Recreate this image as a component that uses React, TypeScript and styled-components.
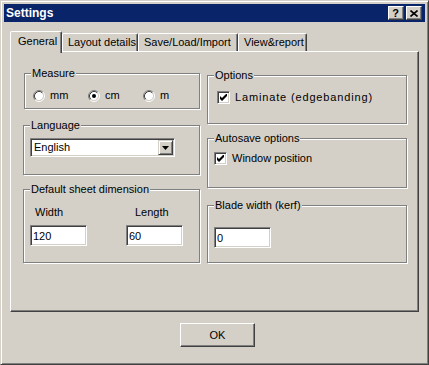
import React from "react";
import styled, { createGlobalStyle } from "styled-components";

const Global = createGlobalStyle`
  html, body { margin: 0; padding: 0; background: #D4D0C8; }
  body {
    font-family: "Liberation Sans", Arial, sans-serif;
    font-size: 11px;
    color: #000;
  }
  * { box-sizing: border-box; }
`;

const Window = styled.div`
  width: 429px;
  height: 365px;
  background: #d4d0c8;
  border: 1px solid;
  border-color: #d4d0c8 #404040 #404040 #d4d0c8;
  box-shadow: inset 1px 1px 0 #fff, inset -1px -1px 0 #808080;
  padding: 3px;
  display: flex;
  flex-direction: column;
`;

const TitleBar = styled.div`
  height: 18px;
  background: #0a246a;
  display: flex;
  align-items: center;
  gap: 2px;
  padding: 0 3px 0 2px;
`;

const Title = styled.div`
  flex: 1;
  color: #fff;
  font-weight: bold;
  font-size: 12px;
  line-height: 18px;
`;

const CaptionButton = styled.div`
  width: 16px;
  height: 14px;
  background: #d4d0c8;
  border: 1px solid;
  border-color: #fff #404040 #404040 #fff;
  box-shadow: inset -1px -1px 0 #808080;
  display: flex;
  align-items: center;
  justify-content: center;
  font-weight: bold;
  font-size: 11px;
  line-height: 12px;
  padding-right: 1px;
`;

const Body = styled.div`
  padding: 9px 0 0 6px;
  display: flex;
  flex-direction: column;
`;

const TabRow = styled.div`
  display: flex;
  align-items: flex-end;
  height: 20px;
`;

const Tab = styled.div<{ $w: number; $active?: boolean }>`
  position: relative;
  z-index: ${(p) => (p.$active ? 1 : 0)};
  width: ${(p) => p.$w}px;
  height: ${(p) => (p.$active ? 22 : 18)}px;
  margin-bottom: ${(p) => (p.$active ? -2 : 0)}px;
  background: #d4d0c8;
  border: 1px solid;
  border-bottom: none;
  border-color: #fff #404040 transparent #fff;
  box-shadow: inset -1px 0 0 #808080;
  border-radius: 2px 2px 0 0;
  padding-left: ${(p) => (p.$active ? 7 : 5)}px;
  padding-top: ${(p) => (p.$active ? 1 : 0)}px;
  line-height: 16px;
  white-space: nowrap;
`;

const Panel = styled.div`
  width: 409px;
  height: 261px;
  border: 1px solid;
  border-color: #fff #404040 #404040 #fff;
  box-shadow: inset -1px -1px 0 #808080;
  padding-left: 12px;
  display: flex;
  gap: 7px;
`;

const Column = styled.div<{ $w: number }>`
  width: ${(p) => p.$w}px;
  display: flex;
  flex-direction: column;
`;

const Group = styled.div<{ $mt: number; $h: number; $ml?: number; $pad: string }>`
  position: relative;
  margin-top: ${(p) => p.$mt}px;
  margin-left: ${(p) => p.$ml ?? 0}px;
  height: ${(p) => p.$h}px;
  border: 1px solid #808080;
  box-shadow: inset 1px 1px 0 #fff, 1px 1px 0 #fff;
  padding: ${(p) => p.$pad};
`;

const Caption = styled.span`
  position: absolute;
  top: -7px;
  left: 6px;
  padding: 0 1px;
  background: #d4d0c8;
  line-height: 13px;
  white-space: nowrap;
`;

const RadioRow = styled.div`
  display: grid;
  grid-template-columns: repeat(3, 55px);
`;

const OptionLabel = styled.label<{ $spacing?: number }>`
  display: flex;
  align-items: center;
  gap: 5px;
  line-height: 13px;
  letter-spacing: ${(p) => p.$spacing ?? 0}px;
  white-space: nowrap;
`;

const CheckBox = styled.span`
  width: 13px;
  height: 13px;
  background: #fff;
  border: 1px solid;
  border-color: #808080 #fff #fff #808080;
  box-shadow: inset 1px 1px 0 #404040, inset -1px -1px 0 #d4d0c8;
  display: flex;
  align-items: center;
  justify-content: center;
  flex: none;
`;

const Select = styled.div`
  width: 145px;
  height: 19px;
  background: #fff;
  border: 1px solid;
  border-color: #808080 #fff #fff #808080;
  box-shadow: inset 1px 1px 0 #404040, inset -1px -1px 0 #d4d0c8;
  padding: 1px 1px 1px 2px;
  display: flex;
  align-items: center;
`;

const SelectText = styled.span`
  flex: 1;
  line-height: 15px;
  padding-left: 1px;
`;

const DropButton = styled.span`
  width: 15px;
  height: 15px;
  background: #d4d0c8;
  border: 1px solid;
  border-color: #d4d0c8 #404040 #404040 #d4d0c8;
  box-shadow: inset 1px 1px 0 #fff, inset -1px -1px 0 #808080;
  display: flex;
  align-items: center;
  justify-content: center;
`;

const DimGrid = styled.div`
  display: grid;
  grid-template-columns: 96px 60px;
  row-gap: 6px;
`;

const DimLabel = styled.span<{ $indent: number }>`
  padding-left: ${(p) => p.$indent}px;
  line-height: 13px;
`;

const TextField = styled.input`
  width: 57px;
  height: 21px;
  margin: 0;
  background: #fff;
  border: 1px solid;
  border-color: #808080 #fff #fff #808080;
  box-shadow: inset 1px 1px 0 #404040, inset -1px -1px 0 #d4d0c8;
  padding: 1px 2px 1px 2px;
  font-family: "Liberation Sans", Arial, sans-serif;
  font-size: 11px;
  line-height: 15px;
  color: #000;
  outline: none;
`;

const Footer = styled.div`
  display: flex;
  justify-content: center;
  padding-top: 11px;
`;

const PushButton = styled.div`
  width: 75px;
  height: 24px;
  background: #d4d0c8;
  border: 1px solid;
  border-color: #fff #404040 #404040 #fff;
  box-shadow: inset -1px -1px 0 #808080;
  display: flex;
  align-items: center;
  justify-content: center;
  line-height: 13px;
`;

function Radio({ checked }: { checked?: boolean }) {
  return (
    <svg width="12" height="12" viewBox="0 0 12 12">
      <circle cx="6" cy="6" r="4.2" fill="#fff" />
      <path d="M2.11 9.89 A5.5 5.5 0 0 1 9.89 2.11" fill="none" stroke="#808080" strokeWidth="1" />
      <path d="M9.89 2.11 A5.5 5.5 0 0 1 2.11 9.89" fill="none" stroke="#fff" strokeWidth="1" />
      <path d="M2.82 9.18 A4.5 4.5 0 0 1 9.18 2.82" fill="none" stroke="#404040" strokeWidth="1" />
      <path d="M9.18 2.82 A4.5 4.5 0 0 1 2.82 9.18" fill="none" stroke="#d4d0c8" strokeWidth="1" />
      {checked && <circle cx="6" cy="6" r="2" fill="#000" />}
    </svg>
  );
}

function Check() {
  return (
    <CheckBox>
      <svg width="7" height="7" viewBox="0 0 7 7">
        <path d="M0 2 L2 4 L7 -1 L7 2 L2 7 L0 5 Z" fill="#000" />
      </svg>
    </CheckBox>
  );
}

export default function App() {
  return (
    <>
      <Global />
      <Window>
        <TitleBar>
          <Title>Settings</Title>
          <CaptionButton>?</CaptionButton>
          <CaptionButton>
            <svg width="8" height="7" viewBox="0 0 8 7">
              <path d="M0.5 0.5 L7.5 6.5 M7.5 0.5 L0.5 6.5" stroke="#000" strokeWidth="1.6" />
            </svg>
          </CaptionButton>
        </TitleBar>
        <Body>
          <TabRow>
            <Tab $w={52} $active>General</Tab>
            <Tab $w={76}>Layout details</Tab>
            <Tab $w={100}>Save/Load/Import</Tab>
            <Tab $w={69}>View&amp;report</Tab>
          </TabRow>
          <Panel>
            <Column $w={177}>
              <Group $mt={21} $h={36} $ml={1} $pad="15px 0 0 8px">
                <Caption>Measure</Caption>
                <RadioRow>
                  <OptionLabel><Radio />mm</OptionLabel>
                  <OptionLabel><Radio checked />cm</OptionLabel>
                  <OptionLabel><Radio />m</OptionLabel>
                </RadioRow>
              </Group>
              <Group $mt={16} $h={50} $pad="12px 0 0 6px">
                <Caption>Language</Caption>
                <Select>
                  <SelectText>English</SelectText>
                  <DropButton>
                    <svg width="7" height="4" viewBox="0 0 7 4">
                      <path d="M0 0 H7 L3.5 4 Z" fill="#000" />
                    </svg>
                  </DropButton>
                </Select>
              </Group>
              <Group $mt={14} $h={74} $pad="16px 0 0 6px">
                <Caption>Default sheet dimension</Caption>
                <DimGrid>
                  <DimLabel $indent={5}>Width</DimLabel>
                  <DimLabel $indent={9}>Length</DimLabel>
                  <TextField defaultValue="120" />
                  <TextField defaultValue="60" />
                </DimGrid>
              </Group>
            </Column>
            <Column $w={200}>
              <Group $mt={23} $h={49} $pad="15px 0 0 9px">
                <Caption>Options</Caption>
                <OptionLabel $spacing={0.85}><Check />Laminate (edgebanding)</OptionLabel>
              </Group>
              <Group $mt={14} $h={50} $pad="13px 0 0 6px">
                <Caption>Autosave options</Caption>
                <OptionLabel><Check />Window position</OptionLabel>
              </Group>
              <Group $mt={17} $h={58} $pad="21px 0 0 6px">
                <Caption>Blade width (kerf)</Caption>
                <TextField defaultValue="0" />
              </Group>
            </Column>
          </Panel>
          <Footer>
            <PushButton>OK</PushButton>
          </Footer>
        </Body>
      </Window>
    </>
  );
}
